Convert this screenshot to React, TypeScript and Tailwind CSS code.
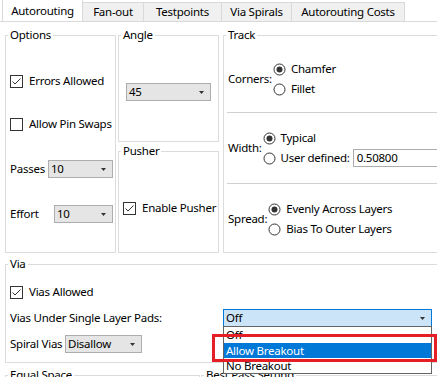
import * as React from 'react';

const GroupBox: React.FC<{ title: string; className: string; children?: React.ReactNode }> = ({ title, className, children }) => (
  <fieldset className={'min-w-0 border border-[#dcdcdc] ' + className}>
    <legend className="ml-[2px] px-[2px] leading-[16px] whitespace-nowrap">{title}</legend>
    {children}
  </fieldset>
);

const CheckBox: React.FC<{ label: string; checked?: boolean }> = ({ label, checked }) => (
  <div className="flex items-center h-[16px]">
    <svg width="13" height="13" viewBox="0 0 13 13" className="shrink-0">
      <rect x="0.5" y="0.5" width="12" height="12" fill="#fff" stroke="#333" />
      {checked && <polyline points="2.5,6.5 5,9 10.5,3.5" fill="none" stroke="#333" strokeWidth="1" />}
    </svg>
    <span className="ml-[6px] whitespace-nowrap">{label}</span>
  </div>
);

const Radio: React.FC<{ label: string; on?: boolean }> = ({ label, on }) => (
  <div className="flex items-center h-[20px]">
    <svg width="13" height="13" viewBox="0 0 13 13" className="shrink-0">
      <circle cx="6.5" cy="6.5" r="5.5" fill="#fff" stroke="#333" />
      {on && <circle cx="6.5" cy="6.5" r="3" fill="#333" />}
    </svg>
    <span className="ml-[5px] whitespace-nowrap">{label}</span>
  </div>
);

const Arrow = () => (
  <svg width="5" height="3" viewBox="0 0 5 3" className="shrink-0">
    <polygon points="0,0 5,0 2.5,3" fill="#333" />
  </svg>
);

const Select: React.FC<{ value: string; className: string }> = ({ value, className }) => (
  <div className={'shrink-0 flex items-center justify-between h-[18px] bg-[#e5e5e5] border border-[#adadad] pl-[2px] pr-[6px] ' + className}>
    <span className="leading-[16px] whitespace-nowrap">{value}</span>
    <Arrow />
  </div>
);

const tabs = [
  { name: 'Autorouting', w: 'w-[81px]' },
  { name: 'Fan-out', w: 'w-[62px]' },
  { name: 'Testpoints', w: 'w-[79px]' },
  { name: 'Via Spirals', w: 'w-[71px]' },
  { name: 'Autorouting Costs', w: 'w-[114px]' },
];

export default function App() {
  return (
    <div className="relative w-[437px] h-[377px] overflow-hidden bg-white text-[11.5px] tracking-[-0.25px] text-black font-['Noto_Sans',sans-serif] leading-[16px]">
      {/* Tab strip */}
      <div className="flex items-end h-[22px] pl-[2px] border-b border-[#d9d9d9]">
        {tabs.map((t, i) =>
          i === 0 ? (
            <div key={t.name} className={'relative z-10 h-[22px] flex items-center justify-center bg-white border border-b-0 border-[#d9d9d9] ' + t.w}>
              {t.name}
            </div>
          ) : (
            <div key={t.name} className={'-ml-px h-[19px] flex items-center justify-center bg-[#f0f0f0] border border-b-0 border-[#d9d9d9] ' + t.w}>
              {t.name}
            </div>
          )
        )}
      </div>

      {/* Top row of groups */}
      <div className="flex pl-[5px] mt-[5px]">
        <GroupBox title="Options" className="w-[111px] h-[226px] shrink-0">
          <div className="flex flex-col pl-[4px] pr-[2px]">
            <div className="mt-[30px]"><CheckBox label="Errors Allowed" checked /></div>
            <div className="mt-[27px]"><CheckBox label="Allow Pin Swaps" /></div>
            <div className="mt-[28px] flex items-center">
              <span className="whitespace-nowrap">Passes</span>
              <Select value="10" className="ml-auto w-[65px]" />
            </div>
            <div className="mt-[27px] flex items-center">
              <span className="whitespace-nowrap">Effort</span>
              <Select value="10" className="ml-auto w-[59px]" />
            </div>
          </div>
        </GroupBox>

        <div className="flex flex-col ml-[2px] shrink-0">
          <GroupBox title="Angle" className="w-[101px] h-[115px]">
            <div className="pl-[7px] mt-[40px]">
              <Select value="45" className="w-[85px]" />
            </div>
          </GroupBox>
          <GroupBox title="Pusher" className="mt-[1px] w-[101px] h-[110px]">
            <div className="pl-[4px] mt-[41px]">
              <CheckBox label="Enable Pusher" checked />
            </div>
          </GroupBox>
        </div>

        <GroupBox title="Track" className="ml-[4px] w-[240px] h-[226px] shrink-0">
          <div className="flex flex-col">
            <div className="mt-[16px] pl-[4px] flex items-center">
              <span>Corners:</span>
              <div className="flex flex-col ml-[1px]">
                <Radio label="Chamfer" on />
                <Radio label="Fillet" />
              </div>
            </div>
            <div className="mt-[13px] ml-[3px] h-px bg-[#d0d0d0]" />
            <div className="mt-[15px] pl-[4px] flex items-center">
              <span>Width:</span>
              <div className="flex flex-col ml-[1px]">
                <Radio label="Typical" on />
                <div className="flex items-center">
                  <Radio label="User defined:" />
                  <div className="ml-[3px] h-[18px] w-[100px] border border-[#adadad] bg-white pl-[3px] flex items-center">0.50800</div>
                </div>
              </div>
            </div>
            <div className="mt-[15px] ml-[3px] h-px bg-[#d0d0d0]" />
            <div className="mt-[15px] pl-[4px] flex items-center">
              <span>Spread:</span>
              <div className="flex flex-col ml-[1px]">
                <Radio label="Evenly Across Layers" on />
                <Radio label="Bias To Outer Layers" />
              </div>
            </div>
          </div>
        </GroupBox>
      </div>

      {/* Via group */}
      <div className="pl-[5px] mt-[3px]">
        <GroupBox title="Via" className="w-[445px] h-[107px]">
          <div className="flex flex-col pl-[4px]">
            <div className="mt-[12px]"><CheckBox label="Vias Allowed" checked /></div>
            <div className="mt-[9px] flex items-center">
              <span className="w-[213px] whitespace-nowrap">Vias Under Single Layer Pads:</span>
              <div className="relative">
                <div className="flex items-center justify-between h-[18px] w-[209px] bg-[#cce4f7] border border-[#0078d7] pl-[2px] pr-[6px]">
                  <span>Off</span>
                  <Arrow />
                </div>
                <div className="absolute left-0 top-[17px] z-20 w-[209px] bg-white border border-[#646464] flex flex-col">
                  <div className="h-[16px] pl-[2px]">Off</div>
                  <div className="h-[15px] pl-[2px] bg-[#0078d7] text-white leading-[15px]">Allow Breakout</div>
                  <div className="h-[15px] pl-[2px] leading-[15px]">No Breakout</div>
                </div>
              </div>
            </div>
            <div className="mt-[8px] flex items-center">
              <span className="w-[55px] whitespace-nowrap">Spiral Vias</span>
              <Select value="Disallow" className="w-[77px]" />
            </div>
          </div>
        </GroupBox>
      </div>

      {/* Bottom groups, clipped by the window */}
      <div className="flex pl-[5px] mt-[4px]">
        <GroupBox title="Equal Space" className="w-[195px] h-[60px] shrink-0" />
        <GroupBox title="Best Pass Setting" className="ml-[1px] w-[240px] h-[60px] shrink-0" />
      </div>

      {/* Red highlight frame */}
      <div className="absolute left-[212px] top-[334px] w-[225px] h-[28px] border-[3px] border-[#e51f25] z-30" />
    </div>
  );
}
